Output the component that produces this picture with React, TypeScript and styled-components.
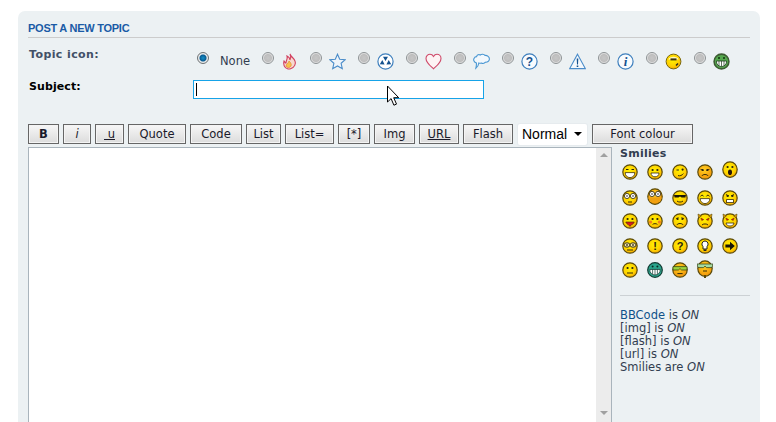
import React from 'react';
import styled, { createGlobalStyle } from 'styled-components';

const GlobalStyle = createGlobalStyle`
  html, body {
    margin: 0;
    padding: 0;
    background: #fff;
    overflow: hidden;
  }
  body {
    font-family: 'DejaVu Sans', Verdana, sans-serif;
    font-size: 11.5px;
    color: #323d4f;
  }
`;

const Page = styled.div`
  position: relative;
  width: 776px;
  height: 422px;
  overflow: hidden;
  padding: 11px 16px 0 18px;
  box-sizing: border-box;
`;

const Panel = styled.div`
  background: #ecf1f3;
  border-radius: 7px 7px 0 0;
  padding: 11px 10px 0;
  height: 440px;
  box-sizing: border-box;
`;

const Heading = styled.h3`
  margin: 0 0 10px;
  height: 15px;
  line-height: 12px;
  border-bottom: 1px solid #ccc;
  font-family: 'Liberation Sans', Arial, sans-serif;
  font-size: 11px;
  letter-spacing: -0.25px;
  font-weight: bold;
  color: #1a5ba6;
`;

const FormRow = styled.div<{ $height: number }>`
  display: grid;
  grid-template-columns: 165px 1fr;
  height: ${(p) => p.$height}px;
`;

const Label = styled.label<{ $strong?: boolean }>`
  font-weight: bold;
  font-size: 11px;
  line-height: 13px;
  padding-left: 1px;
  letter-spacing: ${(p) => (p.$strong ? '0.1px' : '0.4px')};
  color: ${(p) => (p.$strong ? '#000' : '#425067')};
`;

const Options = styled.div`
  display: flex;
  padding: 4px 0 0 4px;
`;

const Option = styled.div<{ $width: number }>`
  display: flex;
  width: ${(p) => p.$width}px;
  flex: none;
`;

const Radio = styled.input`
  appearance: none;
  flex: none;
  width: 12px;
  height: 12px;
  margin: 0 7px 0 0;
  border-radius: 50%;
  border: 1px solid #8d9294;
  box-sizing: border-box;
  background: radial-gradient(circle at 50% 50%, #c6c6c6 0, #bebebe 50%, #f4f4f4 75%, #e2e2e2 100%);
  &:checked {
    background: radial-gradient(circle at 50% 50%, #1290c8 0, #0a5d93 42%, #eeeeee 58%, #d5d5d5 100%);
    border-color: #6d7274;
  }
`;

const NoneText = styled.span`
  margin: 3px 0 0 4px;
  line-height: 13px;
  color: #323d4f;
`;

const TopicIcon = styled.svg`
  flex: none;
  width: 17px;
  height: 17px;
  margin-top: 1px;
`;

const FieldWrap = styled.div`
  position: relative;
  width: 291px;
  height: 19px;
`;

const SubjectInput = styled.input`
  display: block;
  width: 291px;
  height: 19px;
  box-sizing: border-box;
  border: 1px solid #16a3e8;
  background: #fff;
  padding: 0 2px;
  outline: none;
`;

const Caret = styled.span`
  position: absolute;
  left: 3px;
  top: 3px;
  width: 1px;
  height: 13px;
  background: #000;
`;

const Toolbar = styled.div`
  display: flex;
  align-items: center;
  gap: 4px;
  height: 20px;
  margin-bottom: 3px;
`;

const ToolButton = styled.button<{ $width: number; $bold?: boolean; $italic?: boolean; $underline?: boolean }>`
  width: ${(p) => p.$width}px;
  height: 20px;
  flex: none;
  padding: 0;
  box-sizing: border-box;
  border: 1px solid #666;
  box-shadow: inset 0 0 0 1px #f4f4f4;
  background: linear-gradient(#f7f7f7, #dcdcdc);
  font-family: 'DejaVu Sans', Verdana, sans-serif;
  font-size: 11.5px;
  color: #1a1a2a;
  white-space: pre;
  font-weight: ${(p) => (p.$bold ? 'bold' : 'normal')};
  font-style: ${(p) => (p.$italic ? 'italic' : 'normal')};
  text-decoration: ${(p) => (p.$underline ? 'underline' : 'none')};
`;

const SizeSelect = styled.div`
  width: 69px;
  height: 21px;
  flex: none;
  margin: 0 1px;
  box-sizing: border-box;
  background: #fff;
  border-radius: 2px;
  box-shadow: 0 0 0 1px #e6ebee;
  display: flex;
  align-items: center;
  justify-content: space-between;
  padding: 0 5px 0 4px;
  font-family: 'Liberation Sans', Arial, sans-serif;
  font-size: 14px;
  color: #000;
  &::after {
    content: '';
    border-left: 4px solid transparent;
    border-right: 4px solid transparent;
    border-top: 4px solid #000;
  }
`;

const EditorRow = styled.div`
  display: flex;
`;

const Editor = styled.div`
  width: 584px;
  height: 280px;
  flex: none;
  box-sizing: border-box;
  border: 1px solid #a9b4bc;
  background: #fff;
  display: flex;
  justify-content: flex-end;
`;

const ScrollBar = styled.div`
  width: 15px;
  box-sizing: border-box;
  background: #ececec;
  display: flex;
  flex-direction: column;
  align-items: center;
  justify-content: space-between;
  padding: 5px 0 11px;
`;

const Arrow = styled.span<{ $down?: boolean }>`
  width: 0;
  height: 0;
  border-left: 4px solid transparent;
  border-right: 4px solid transparent;
  ${(p) => (p.$down ? 'border-top: 4px solid #a0a0a0;' : 'border-bottom: 4px solid #a0a0a0;')}
`;

const Side = styled.div`
  flex: 1;
  padding: 0 0 0 8px;
`;

const SideTitle = styled.div`
  font-weight: bold;
  font-size: 11px;
  letter-spacing: 0.25px;
  line-height: 13px;
  color: #323d4f;
`;

const SmileyGrid = styled.div`
  display: grid;
  grid-template-columns: repeat(5, 25px);
  grid-auto-rows: 24.5px;
  justify-items: center;
  align-items: center;
  margin-left: -3px;
  width: 125px;
`;

const SmileySvg = styled.svg<{ $tall?: boolean; $nudge?: number }>`
  display: block;
  width: 16px;
  height: ${(p) => (p.$tall ? 19 : 16)}px;
  margin-top: ${(p) => p.$nudge ?? 0}px;
`;

const SideRule = styled.div`
  height: 1px;
  background: #ccd1d4;
  margin: 12px 0 13px;
`;

const Status = styled.div`
  line-height: 13px;
  color: #323d4f;
  & a { color: #105289; text-decoration: none; }
  & em { font-style: italic; }
`;

const Pointer = styled.svg`
  position: absolute;
  left: 386px;
  top: 85px;
  width: 15px;
  height: 23px;
`;

const topicIcons: Record<string, React.ReactNode> = {
  fire: (
    <>
      <path d="M9 1c1 3 4 4 5 7 1 2 0 7-5 8H7C3 15 2 11 3 8c1 1 1 2 2 2 0-3 2-4 1-7 2 1 3 2 3 4 1-2 1-4 0-6z" fill="#f7d9cf" stroke="#d2405f" strokeWidth="1.1" />
      <path d="M8 8c1 1 3 3 2 5-1 2-4 2-5 0 0-2 2-2 3-5z" fill="#f7c24a" stroke="#e08a30" strokeWidth=".7" />
    </>
  ),
  star: <path d="M8.5 1.2l2.2 5 5.5.5-4.1 3.6 1.2 5.4-4.8-2.8-4.8 2.8 1.2-5.4L.8 6.7l5.5-.5z" fill="#eef4fa" stroke="#4a8cc9" strokeWidth="1.1" />,
  radiation: (
    <>
      <circle cx="8.5" cy="8.5" r="7.6" fill="#fff" stroke="#3d7fbd" strokeWidth="1.2" />
      <path d="M6 3.8h5L8.5 8zM2.8 11.2L5.3 7 7.6 11.4zM14.2 11.2L11.7 7 9.4 11.4z" fill="#14528f" />
    </>
  ),
  heart: <path d="M8.5 15.8C5 12.5 1 9.5 1 5.4 1 2.8 3 1.2 5 1.2c1.6 0 2.8.9 3.5 2.2.7-1.3 1.9-2.2 3.5-2.2 2 0 4 1.6 4 4.2 0 4.1-4 7.1-7.5 10.4z" fill="#fdf3f4" stroke="#cf4a6a" strokeWidth="1.1" />,
  bubble: <path d="M3.6 3.6C4 1.8 6 1.2 7.2 2 8.6.8 11 1 12 2.4c2.2-.2 4.6 1.4 4.4 3.8-.2 2-2 3.2-3.9 3-1 1.2-3 1.4-4.3.8-.8.3-1.6.3-2.4 0-.2 1.6-.8 4-3 5.4.4-1.4.8-3 .6-5.4C1 9.2.2 7 1 5.4c.5-1 1.6-1.8 2.6-1.8z" fill="#f2f8fd" stroke="#4a97d2" strokeWidth="1.1" />,
  question: (
    <>
      <circle cx="8.5" cy="8.5" r="7.6" fill="#f8fbfe" stroke="#3d7fbd" strokeWidth="1.2" />
      <text x="8.5" y="12.8" textAnchor="middle" fontFamily="Liberation Sans, sans-serif" fontWeight="bold" fontSize="12" fill="#14528f">?</text>
    </>
  ),
  warning: (
    <>
      <path d="M8.5 1.2L16.3 15.6H.7z" fill="#f4f8fc" stroke="#4a8cc9" strokeWidth="1.1" />
      <path d="M7.7 5.5h1.6l-.3 6H8zM7.7 12.5h1.6v1.6H7.7z" fill="#14528f" />
    </>
  ),
  info: (
    <>
      <circle cx="8.5" cy="8.5" r="7.6" fill="#f8fbfe" stroke="#3d7fbd" strokeWidth="1.2" />
      <text x="8.5" y="13" textAnchor="middle" fontFamily="Liberation Serif, serif" fontStyle="italic" fontWeight="bold" fontSize="13" fill="#14528f">i</text>
    </>
  ),
  roll: (
    <>
      <circle cx="8.5" cy="8.5" r="7.4" fill="url(#faceYellow)" stroke="#7a6a10" strokeWidth="1" />
      <path d="M3.4 6.4C4.4 3 12.6 3 13.6 6.4z" fill="#fff" opacity=".75" />
      <rect x="5.5" y="5.4" width="6" height="2" fill="#3d3410" />
      <path d="M11 12.6l2-2" stroke="#222" strokeWidth="1.4" />
    </>
  ),
  green: (
    <>
      <circle cx="8.5" cy="8.5" r="7.4" fill="#55a84e" stroke="#3d5c33" strokeWidth="1.6" />
      <path d="M3.4 8h10.2c.2 3-2 5.6-5.1 5.6S3.2 11 3.4 8z" fill="#fff" stroke="#1d3a1a" strokeWidth=".8" />
      <path d="M6 8v5M8.5 8v5.4M11 8v5" stroke="#1d3a1a" strokeWidth=".7" />
      <circle cx="6" cy="5" r="1" fill="#12300f" />
      <circle cx="11" cy="5" r="1" fill="#12300f" />
    </>
  ),
};

const iconOrder = ['fire', 'star', 'radiation', 'heart', 'bubble', 'question', 'warning', 'info', 'roll', 'green'];

type SmileyDef = { kind: string; tall?: boolean; nudge?: number };

const smileyRows: SmileyDef[] = [
  { kind: 'biggrin' }, { kind: 'smile' }, { kind: 'wink' }, { kind: 'sad-flat' }, { kind: 'shock', tall: true, nudge: -3 },
  { kind: 'rolleyes', nudge: 3 }, { kind: 'surprised', tall: true, nudge: 1 }, { kind: 'cool', nudge: 3 }, { kind: 'laugh', nudge: 3 }, { kind: 'mad', nudge: 3 },
  { kind: 'tongue' }, { kind: 'blush' }, { kind: 'sad' }, { kind: 'evil' }, { kind: 'twisted' },
  { kind: 'glasses-roll' }, { kind: 'exclaim' }, { kind: 'question' }, { kind: 'idea' }, { kind: 'arrow' },
  { kind: 'neutral' }, { kind: 'green' }, { kind: 'nerd' }, { kind: 'geek', tall: true, nudge: -1 },
];

const eyes = <><circle cx="5.6" cy="6" r="1.1" fill="#2a2210" /><circle cx="10.4" cy="6" r="1.1" fill="#2a2210" /></>;
const bigEyes = (
  <>
    <circle cx="5" cy="6" r="2.6" fill="#fff" stroke="#2a2210" strokeWidth=".8" />
    <circle cx="11" cy="6" r="2.6" fill="#fff" stroke="#2a2210" strokeWidth=".8" />
    <circle cx="5" cy="6" r=".8" fill="#222" />
    <circle cx="11" cy="6" r=".8" fill="#222" />
  </>
);
const grin = <path d="M3.2 8.6h9.6c0 3-2 5-4.8 5s-4.8-2-4.8-5z" fill="#fff" stroke="#3a2d08" strokeWidth=".8" />;
const frown = <path d="M4.8 12c1-2 5.4-2 6.4 0" fill="none" stroke="#3a2d08" strokeWidth="1" />;
const symbol = (c: string) => (
  <text x="8" y="12.4" textAnchor="middle" fontFamily="Liberation Sans, sans-serif" fontWeight="bold" fontSize="11" fill="#2a2210">{c}</text>
);
const horns = <path d="M1 1l3.4 1.8L1.6 5zM15 1l-3.4 1.8L14.4 5z" fill="#e0a000" stroke="#5a4808" strokeWidth=".6" />;
const redEyes = <path d="M3.8 5l3 1.6-2 1zM12.2 5l-3 1.6 2 1z" fill="#d8190f" stroke="#5a1808" strokeWidth=".4" />;

const details: Record<string, React.ReactNode> = {
  biggrin: <><path d="M4 5.5h2.5M9.5 5.5H12" stroke="#2a2210" strokeWidth="1" />{grin}</>,
  smile: <>{eyes}<path d="M4 9h8c0 2.6-1.8 3.8-4 3.8S4 11.6 4 9z" fill="#fff" stroke="#3a2d08" strokeWidth=".8" /></>,
  wink: <><path d="M4.5 6h2.4" stroke="#2a2210" strokeWidth="1" /><circle cx="10.6" cy="5.6" r="1.1" fill="#2a2210" /><path d="M6 11.6c2 .6 4-.2 5.4-2" fill="none" stroke="#3a2d08" strokeWidth="1" /></>,
  'sad-flat': <><path d="M3.6 5.4l3 1M12.4 5.4l-3 1" stroke="#2a2210" strokeWidth=".9" />{eyes}{frown}</>,
  shock: <>{eyes}<ellipse cx="8" cy="11.2" rx="2" ry="2.8" fill="#2a1508" /></>,
  rolleyes: <>{bigEyes}<path d="M6 12h4" stroke="#3a2d08" strokeWidth="1" /></>,
  surprised: <>{bigEyes}<path d="M1 9.5h14L13 14H3z" fill="#f0a010" /></>,
  cool: <><path d="M2 5h12l-.6 2.6H9.6L8 6.4 6.4 7.6H2.6z" fill="#1c1808" /><path d="M5 11c1 1.4 5 1.4 6 0" fill="none" stroke="#3a2d08" strokeWidth="1" /></>,
  laugh: <><path d="M3.6 6.4c.6-1.6 2.4-1.6 3 0M9.4 6.4c.6-1.6 2.4-1.6 3 0" fill="none" stroke="#2a2210" strokeWidth="1" />{grin}</>,
  mad: <><path d="M4 4.6l3 1.4M12 4.6L9 6" stroke="#2a2210" strokeWidth="1" />{eyes}<rect x="4.6" y="9.6" width="6.8" height="3" fill="#fff" stroke="#3a2d08" strokeWidth=".8" /></>,
  tongue: <>{eyes}<path d="M3.8 9h8.4c-.4 1.6-1.6 2.4-2.4 2.4L8 13.4 6 11.4C5 11 4 10 3.8 9z" fill="#d81c20" stroke="#3a2d08" strokeWidth=".6" /></>,
  blush: <><circle cx="3.6" cy="9" r="1.6" fill="#f08020" /><circle cx="12.4" cy="9" r="1.6" fill="#f08020" />{eyes}<path d="M5.6 11.4c1-1 3.8-1 4.8 0" fill="none" stroke="#3a2d08" strokeWidth="1" /></>,
  sad: <><path d="M4 5.6l2.6-1M12 5.6l-2.6-1" stroke="#2a2210" strokeWidth=".8" />{eyes}{frown}</>,
  evil: <>{horns}{redEyes}<path d="M5 12c1-1.4 5-1.4 6 0" fill="none" stroke="#3a2d08" strokeWidth="1" /></>,
  twisted: <>{horns}{redEyes}<path d="M4 10h8c-.4 2-2 3-4 3s-3.6-1-4-3z" fill="#fff" stroke="#3a2d08" strokeWidth=".8" /></>,
  'glasses-roll': <><ellipse cx="5" cy="7" rx="3" ry="2.2" fill="#f4e9a8" stroke="#2a2210" strokeWidth=".9" /><ellipse cx="11" cy="7" rx="3" ry="2.2" fill="#f4e9a8" stroke="#2a2210" strokeWidth=".9" /><path d="M4 6l2 2M6 6L4 8M10 6l2 2M12 6l-2 2" stroke="#222" strokeWidth=".6" /><path d="M5 12h6" stroke="#3a2d08" strokeWidth="1" /></>,
  exclaim: symbol('!'),
  question: symbol('?'),
  idea: <><path d="M8 3a3.2 3.2 0 0 1 2 5.6V11H6V8.6A3.2 3.2 0 0 1 8 3z" fill="#fff" stroke="#222" strokeWidth="1" /><rect x="6.6" y="11.4" width="2.8" height="1.6" fill="#222" /></>,
  arrow: <path d="M3.4 6.4h4.6V3.8L12.8 8 8 12.2V9.6H3.4z" fill="#1a1608" />,
  neutral: <>{eyes}<path d="M5 11h6" stroke="#3a2d08" strokeWidth="1" /></>,
  nerd: <><path d="M1 4.6h14v3.4H9.6L8 6.6 6.4 8H1z" fill="#9cd43c" stroke="#2a3a10" strokeWidth=".7" /><path d="M5.4 11.6h5.2" stroke="#3a2d08" strokeWidth="1" /></>,
  geek: <><path d="M0 4h16l-1 3.6H9.4L8 6 6.6 7.6H1z" fill="#a8dca0" stroke="#2a3a10" strokeWidth=".7" /><path d="M6 11h4" stroke="#3a2d08" strokeWidth="1" /><rect x="7" y="15" width="2" height="3" fill="#5a4808" /></>,
};

const Smiley = ({ kind, tall, nudge }: SmileyDef) => {
  if (kind === 'green') {
    return (
      <SmileySvg viewBox="0 0 16 16">
        <circle cx="8" cy="8" r="7.3" fill="#2aa58c" stroke="#123c34" strokeWidth="1.2" />
        <path d="M2.8 7.4h10.4c.2 3.2-2 5.6-5.2 5.6S2.6 10.6 2.8 7.4z" fill="#fff" stroke="#123c34" strokeWidth=".8" />
        <path d="M5.6 7.4v5M8 7.4V13M10.4 7.4v5" stroke="#123c34" strokeWidth=".7" />
        <circle cx="5.6" cy="4.6" r="1" fill="#0a2a24" />
        <circle cx="10.4" cy="4.6" r="1" fill="#0a2a24" />
      </SmileySvg>
    );
  }
  const isSad = kind === 'sad-flat' || kind === 'surprised' || kind === 'nerd' || kind === 'geek';
  const fill = isSad ? 'url(#faceOrange)' : 'url(#faceYellow)';
  return (
    <SmileySvg viewBox={tall ? '0 0 16 19' : '0 0 16 16'} $tall={tall} $nudge={nudge}>
      {tall ? (
        <ellipse cx="8" cy="8.6" rx="7.2" ry="7.8" fill={fill} stroke="#5a4a08" strokeWidth="1.2" />
      ) : (
        <circle cx="8" cy="8" r="7.2" fill={fill} stroke="#5a4a08" strokeWidth="1.2" />
      )}
      {details[kind]}
    </SmileySvg>
  );
};

const buttons = [
  { label: 'B', width: 31, bold: true },
  { label: 'i', width: 28, italic: true },
  { label: '\u00a0u', width: 29, underline: true },
  { label: 'Quote', width: 58 },
  { label: 'Code', width: 52 },
  { label: 'List', width: 35 },
  { label: 'List=', width: 49 },
  { label: '[*]', width: 32 },
  { label: 'Img', width: 41 },
  { label: 'URL', width: 40, underline: true },
  { label: 'Flash', width: 50 },
];

export default function App() {
  return (
    <>
      <GlobalStyle />
      <Page>
        <svg width="0" height="0" style={{ position: 'absolute' }}>
          <defs>
            <radialGradient id="faceYellow" cx="45%" cy="40%" r="65%">
              <stop offset="0%" stopColor="#fff200" />
              <stop offset="65%" stopColor="#ffd000" />
              <stop offset="100%" stopColor="#f09800" />
            </radialGradient>
            <radialGradient id="faceOrange" cx="45%" cy="35%" r="70%">
              <stop offset="0%" stopColor="#ffd020" />
              <stop offset="100%" stopColor="#f09008" />
            </radialGradient>
          </defs>
        </svg>
        <Panel>
          <Heading>POST A NEW TOPIC</Heading>
          <FormRow $height={32}>
            <Label>Topic icon:</Label>
            <Options>
              <Option $width={65}>
                <Radio type="radio" name="icon" defaultChecked />
                <NoneText>None</NoneText>
              </Option>
              {iconOrder.map((name) => (
                <Option key={name} $width={48}>
                  <Radio type="radio" name="icon" />
                  <TopicIcon viewBox="0 0 17 17">{topicIcons[name]}</TopicIcon>
                </Option>
              ))}
            </Options>
          </FormRow>
          <FormRow $height={44}>
            <Label $strong>Subject:</Label>
            <FieldWrap>
              <SubjectInput type="text" readOnly />
              <Caret />
            </FieldWrap>
          </FormRow>
          <Toolbar>
            {buttons.map((b) => (
              <ToolButton key={b.label} $width={b.width} $bold={b.bold} $italic={b.italic} $underline={b.underline}>
                {b.label}
              </ToolButton>
            ))}
            <SizeSelect>Normal</SizeSelect>
            <ToolButton $width={101}>Font colour</ToolButton>
          </Toolbar>
          <EditorRow>
            <Editor>
              <ScrollBar>
                <Arrow />
                <Arrow $down />
              </ScrollBar>
            </Editor>
            <Side>
              <SideTitle>Smilies</SideTitle>
              <SmileyGrid>
                {smileyRows.map((s, i) => (
                  <Smiley key={i} {...s} />
                ))}
              </SmileyGrid>
              <SideRule />
              <Status>
                <a href="#bbcode">BBCode</a> is <em>ON</em>
                <br />[img] is <em>ON</em>
                <br />[flash] is <em>ON</em>
                <br />[url] is <em>ON</em>
                <br />Smilies are <em>ON</em>
              </Status>
            </Side>
          </EditorRow>
        </Panel>
        <Pointer viewBox="0 0 15 23">
          <path d="M1.5 1v16l3.6-3.4 2.8 6.6 2.6-1.1-2.8-6.4h5z" fill="#fff" stroke="#000" strokeWidth="1" strokeLinejoin="miter" />
        </Pointer>
      </Page>
    </>
  );
}
